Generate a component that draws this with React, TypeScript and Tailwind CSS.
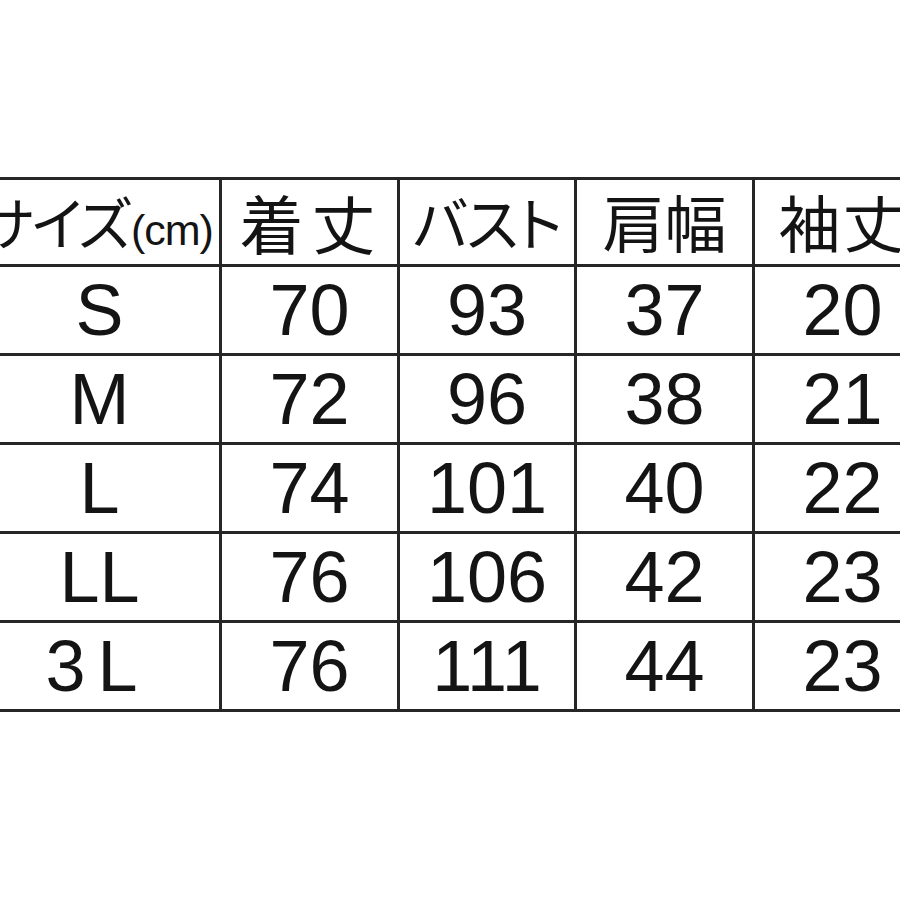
const rows = [
  { size: 'S', length: '70', bust: '93', shoulder: '37', sleeve: '20' },
  { size: 'M', length: '72', bust: '96', shoulder: '38', sleeve: '21' },
  { size: 'L', length: '74', bust: '101', shoulder: '40', sleeve: '22' },
  { size: 'LL', length: '76', bust: '106', shoulder: '42', sleeve: '23' },
  { size: '3 L', length: '76', bust: '111', shoulder: '44', sleeve: '23' },
];

const jp = "font-['Noto_Sans_CJK_JP',sans-serif] [font-feature-settings:'palt']";
const num = "font-['Liberation_Sans',Arial,sans-serif] text-[72px] leading-none";
const cell = 'border-[3px] border-[#262626] text-center align-middle p-0';

const App = () => {
  return (
    <div className="w-[900px] h-[900px] overflow-hidden bg-white text-[#141414]">
      <table className="table-fixed border-collapse ml-[-23px] mt-[177px] w-[953px]">
        <colgroup>
          <col className="w-[242px]" />
          <col className="w-[178px]" />
          <col className="w-[177px]" />
          <col className="w-[178px]" />
          <col className="w-[178px]" />
        </colgroup>
        <thead>
          <tr className="h-[87px]">
            <th className={`${cell} font-normal whitespace-nowrap pr-[38px]`}>
              <span className={`${jp} text-[57px] leading-none tracking-[-2px]`}>サイズ</span>
              <span className="font-['Liberation_Sans',Arial,sans-serif] text-[43px] leading-none tracking-[-1px] ml-[2px]">(cm)</span>
            </th>
            <th className={`${cell} font-normal`}>
              <span className={`${jp} text-[64px] leading-none tracking-[8px] pl-[4px]`}>着丈</span>
            </th>
            <th className={`${cell} font-normal`}>
              <span className={`${jp} text-[58px] leading-none tracking-[-1px]`}>バスト</span>
            </th>
            <th className={`${cell} font-normal`}>
              <span className={`${jp} text-[62px] leading-none`}>肩幅</span>
            </th>
            <th className={`${cell} font-normal`}>
              <span className={`${jp} text-[62px] leading-none tracking-[2px]`}>袖丈</span>
            </th>
          </tr>
        </thead>
        <tbody>
          {rows.map(row => (
            <tr key={row.size} className="h-[89px]">
              <td className={`${cell} ${num} whitespace-pre ${row.size === '3 L' ? '[word-spacing:-8px] pr-[16px]' : ''}`}>{row.size}</td>
              <td className={`${cell} ${num}`}>{row.length}</td>
              <td className={`${cell} ${num}`}>{row.bust}</td>
              <td className={`${cell} ${num}`}>{row.shoulder}</td>
              <td className={`${cell} ${num}`}>{row.sleeve}</td>
            </tr>
          ))}
        </tbody>
      </table>
    </div>
  );
};

export default App;
